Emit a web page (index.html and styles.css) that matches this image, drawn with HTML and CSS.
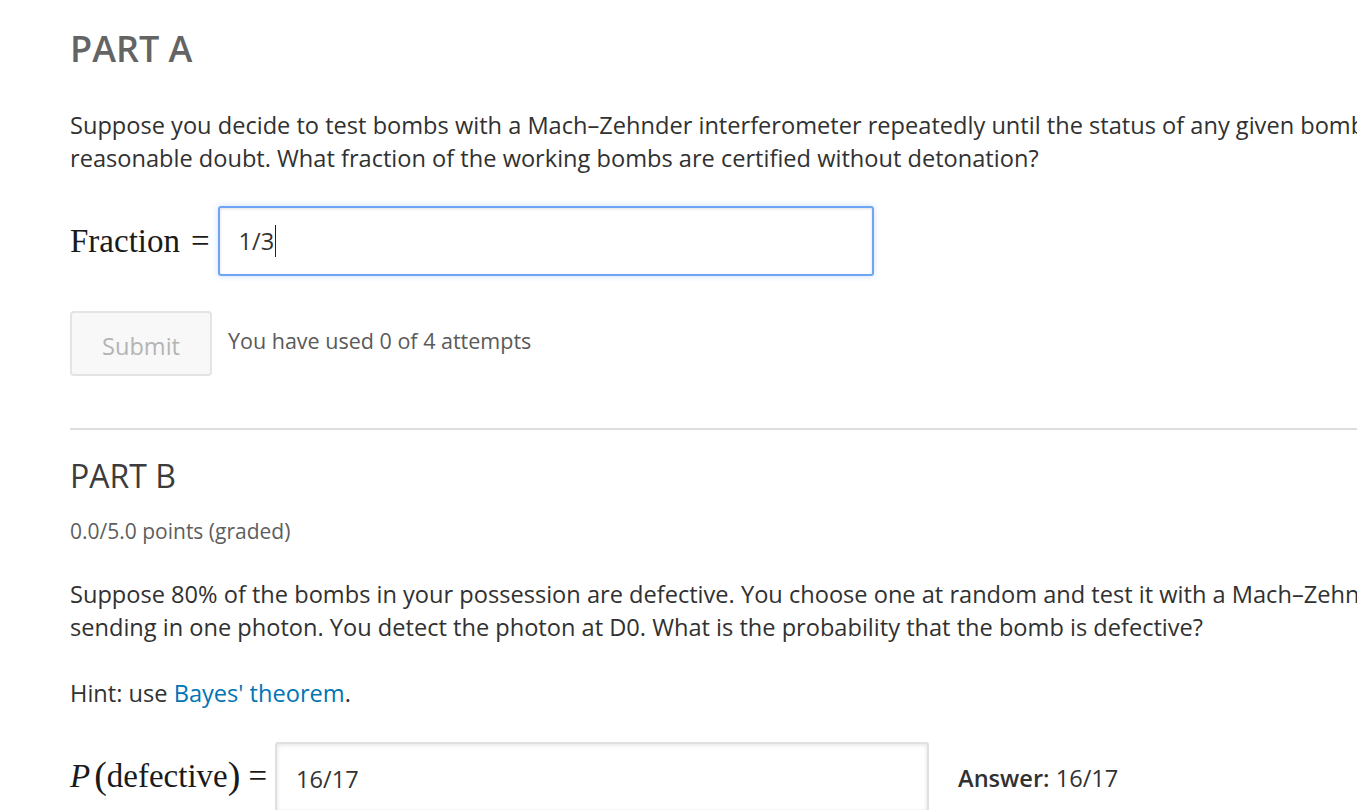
FILE: index.html
```html
<!DOCTYPE html>
<html lang="en">
<head>
<meta charset="utf-8">
<title>Problem</title>
<link rel="stylesheet" href="styles.css">
</head>
<body>
<div class="page">
  <section class="problem">
    <h2 class="part-a">PART A</h2>
    <p class="question">Suppose you decide to test bombs with a Mach–Zehnder interferometer repeatedly until the status of any given bomb is known beyond reasonable doubt. What fraction of the working bombs are certified without detonation?</p>
    <div class="answer-row">
      <span class="math">Fraction<span class="eq">=</span></span>
      <div class="input focused"><span class="value">1/3</span><span class="caret"></span></div>
    </div>
    <div class="submit-row">
      <button class="submit">Submit</button>
      <span class="attempts">You have used 0 of 4 attempts</span>
    </div>
  </section>
  <hr class="divider">
  <section class="problem">
    <h2 class="part-b">PART B</h2>
    <div class="points">0.0/5.0 points (graded)</div>
    <p class="question">Suppose 80% of the bombs in your possession are defective. You choose one at random and test it with a Mach–Zehnder interferometer by sending in one photon. You detect the photon at D0. What is the probability that the bomb is defective?</p>
    <p class="hint">Hint: use <a href="#" class="link">Bayes' theorem</a>.</p>
    <div class="answer-row">
      <span class="math math-p"><i class="var">P</i><span class="paren">(</span>defective<span class="paren">)</span><span class="eq">=</span></span>
      <div class="input plain"><span class="value">16/17</span></div>
      <span class="answer"><b>Answer:</b> 16/17</span>
    </div>
  </section>
</div>
</body>
</html>
```
FILE: styles.css
```css
html, body {
  margin: 0;
  padding: 0;
  background: #fff;
  overflow: hidden;
}
body {
  font-family: "Open Sans", "Noto Sans", sans-serif;
  color: #313131;
  width: 1357px;
  height: 810px;
}
.page {
  padding: 26px 0 0 70px;
  width: 1600px;
}
.problem {
  width: 1585px;
}
h2 {
  margin: 0;
  line-height: 1.2;
}
.part-a {
  font-size: 36px;
  font-weight: 600;
  color: #646464;
  padding-top: 1px;
}
.part-b {
  font-size: 32px;
  font-weight: 400;
  color: #3c3c3c;
  margin-top: 27px;
}
.question {
  font-size: 23.6px;
  line-height: 33px;
  margin: 39px 0 0;
}
.points {
  font-size: 21px;
  line-height: 30px;
  color: #5e5e5e;
  margin-top: 20px;
}
.part-b + .points + .question {
  margin-top: 32px;
}
.hint {
  font-size: 23.6px;
  line-height: 33px;
  margin: 33px 0 0;
}
.link {
  color: #0075b4;
  text-decoration: none;
}
.answer-row {
  display: flex;
  align-items: center;
  margin-top: 31px;
}
.hint + .answer-row {
  margin-top: 32px;
}
.math {
  font-family: "Liberation Serif", "DejaVu Serif", serif;
  font-size: 33px;
  color: #1a1a1a;
  display: inline-flex;
  align-items: center;
  white-space: nowrap;
}
.math .eq {
  margin-left: 11px;
  margin-right: 8px;
}
.math-p .eq {
  margin-left: 8px;
}
.math .var {
  font-style: italic;
  margin-right: 4px;
}
.math .paren {
  font-size: 38px;
  line-height: 1;
  position: relative;
  top: -2px;
}
.input {
  box-sizing: border-box;
  width: 656px;
  height: 70px;
  border-radius: 3px;
  display: flex;
  align-items: center;
  padding-left: 19px;
  font-size: 23.6px;
  color: #333;
  background: #fff;
}
.input.focused {
  border: 2px solid #6ea6f5;
  box-shadow: 0 0 6px rgba(110, 166, 245, 0.35), inset 0 1px 3px rgba(0,0,0,0.12);
}
.input.plain {
  width: 654px;
  border: 2px solid #e0e0e0;
  box-shadow: inset 0 1px 4px rgba(0,0,0,0.12);
  padding-top: 4px;
}
.caret {
  display: inline-block;
  width: 1px;
  height: 32px;
  background: #222;
  margin-left: 1px;
}
.answer {
  font-size: 23.6px;
  margin-left: 29px;
  color: #313131;
  padding-top: 2px;
}
.answer b {
  font-weight: 600;
}
.submit-row {
  display: flex;
  align-items: center;
  margin-top: 35px;
}
.submit {
  box-sizing: border-box;
  width: 142px;
  height: 65px;
  background: #f8f8f8;
  border: 2px solid #e4e4e4;
  border-radius: 4px;
  font-family: "Open Sans", sans-serif;
  font-size: 23.6px;
  color: #b4b4b4;
  padding: 4px 0 0;
}
.attempts {
  font-size: 21.5px;
  color: #5a5a5a;
  margin-left: 16px;
  margin-top: -6px;
}
.divider {
  border: 0;
  height: 2px;
  background: #dddddd;
  margin: 52px 0 0;
}
```
